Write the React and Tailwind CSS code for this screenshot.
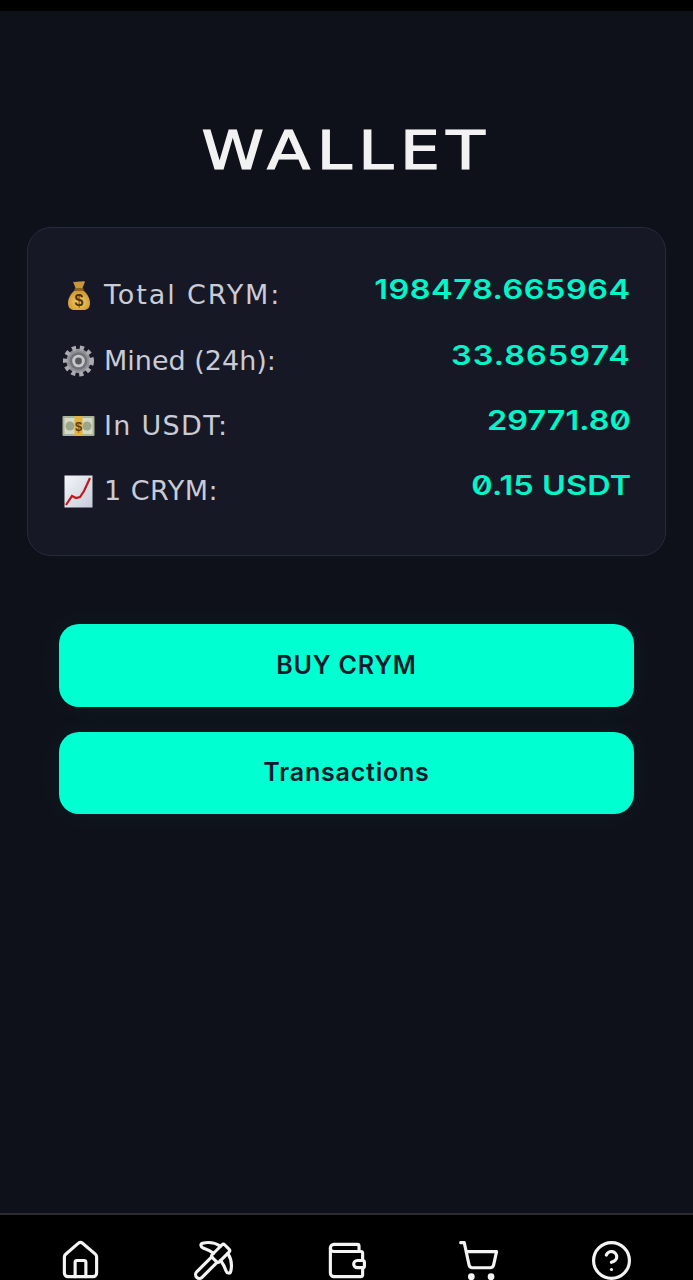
import { House, Pickaxe, Wallet, ShoppingCart, CircleHelp } from 'lucide-react';

const BagIcon = () => (
    <svg width="32" height="32" viewBox="0 0 32 32">
        <defs>
            <radialGradient id="bagFill" cx="0.5" cy="0.6" r="0.65">
                <stop offset="0" stopColor="#f6cf6a" />
                <stop offset="1" stopColor="#c98f2e" />
            </radialGradient>
        </defs>
        <path d="M10 1.500c2 1.200 3.500 .2 6 0 2.500 .2 4 -1 6 .2l-2.500 6.300h-7z" fill="#c9963a" />
        <rect x="11.500" y="8" width="9" height="2.500" rx="1.200" fill="#8a6420" />
        <path d="M11.500 10.500h9c4 3.500 6.500 8 6.500 12.500 0 5 -3 7 -6 7h-10c-3 0 -6 -2 -6 -7 0 -4.500 2.500 -9 6.500 -12.500z" fill="url(#bagFill)" />
        <text x="16" y="26" textAnchor="middle" fontSize="16" fontWeight="700" fill="#4a3410" fontFamily="'Liberation Sans', sans-serif">$</text>
    </svg>
);

const GearIcon = () => (
    <svg width="34" height="34" viewBox="0 0 34 34">
        <circle cx="17" cy="17" r="12.500" fill="#8e9096" />
        <circle cx="17" cy="17" r="13.500" fill="none" stroke="#a9abb0" strokeWidth="5" strokeDasharray="4.200 3.870" />
        <circle cx="17" cy="17" r="9" fill="#6f7177" />
        <circle cx="17" cy="17" r="6.500" fill="#c4c6ca" />
        <circle cx="17" cy="17" r="3.500" fill="#55575c" />
    </svg>
);

const CashIcon = () => (
    <svg width="33" height="22" viewBox="0 0 33 22">
        <rect x="0.500" y="1" width="32" height="20" rx="1" fill="#a9b59a" />
        <rect x="2.500" y="3" width="28" height="16" fill="#d6d9c4" />
        <circle cx="8" cy="11" r="4.500" fill="#9ba68a" />
        <circle cx="25" cy="11" r="4.500" fill="#9ba68a" />
        <rect x="12.500" y="1" width="8" height="20" fill="#e2b33f" />
        <text x="16.500" y="16" textAnchor="middle" fontSize="13" fontWeight="700" fill="#5a4310" fontFamily="'Liberation Sans', sans-serif">$</text>
    </svg>
);

const ChartIcon = () => (
    <svg width="29" height="33" viewBox="0 0 29 33">
        <defs>
            <linearGradient id="chartFill" x1="0" y1="0" x2="1" y2="1">
                <stop offset="0" stopColor="#f4f6f9" />
                <stop offset="1" stopColor="#c6ccd8" />
            </linearGradient>
        </defs>
        <rect x="0.500" y="0.500" width="28" height="32" fill="url(#chartFill)" />
        <path d="M2 30l6 -9 4 2 4 -1 4 -6 6 -13" fill="none" stroke="#c4161c" strokeWidth="2.200" />
    </svg>
);

const ROWS = [
    { icon: <BagIcon />, label: "Total CRYM:", labelClass: "tracking-[1.9px]", value: "198478.665964", valueClass: "tracking-[0.45px]" },
    { icon: <GearIcon />, label: "Mined (24h):", labelClass: "tracking-[0px]", value: "33.865974", valueClass: "tracking-[0.9px]" },
    { icon: <CashIcon />, label: "In USDT:", labelClass: "tracking-[1.3px]", value: "29771.80", valueClass: "tracking-[0.05px]" },
    { icon: <ChartIcon />, label: "1 CRYM:", labelClass: "tracking-[0.5px]", value: "0.15 USDT", valueClass: "tracking-[0.1px]" },
];

const NAV_ICONS = [House, Pickaxe, Wallet, ShoppingCart, CircleHelp];

export default function App() {
    return (
        <div className="h-[1280px] overflow-hidden flex flex-col bg-[#0f111a] font-['Inter',sans-serif]">
            <div className="h-[11px] bg-black shrink-0"></div>

            <main className="flex-1">
                <h1 className="mt-[106px] h-[68px] leading-[68px] text-center text-[54px] font-normal tracking-[5.5px] scale-x-[1.17] text-[#f2f2f2] [-webkit-text-stroke:1.2px_#f2f2f2] font-['DejaVu_Sans',sans-serif]">WALLET</h1>

                <div className="mt-[42px] mx-[27px] h-[329px] pt-[35px] pl-[34px] pr-[34px] rounded-[24px] bg-[#161825] border border-[#252b3b] shadow-[0_0_24px_rgba(0,255,209,0.02)]">
                    {ROWS.map(row => (
                        <div key={row.label} className="h-[65.33px] flex items-center justify-between">
                            <div className="flex items-center">
                                <span className="w-[33px] flex justify-center">{row.icon}</span>
                                <span className={`ml-[9px] text-[27px] text-[#c9cbd6] font-['DejaVu_Sans',sans-serif] ${row.labelClass}`}>{row.label}</span>
                            </div>
                            <span className={`mb-[10px] text-[27px] font-semibold slashed-zero scale-x-[1.2] origin-right text-[#00f5c8] ${row.valueClass}`}>{row.value}</span>
                        </div>
                    ))}
                </div>

                <div className="mt-[68px] mx-[59px] flex flex-col gap-[25px]">
                    <button className="h-[82.5px] rounded-[20px] bg-[#00ffd1] text-[25px] font-semibold tracking-[0.8px] text-[#0f1a2e] shadow-[0_0_30px_rgba(0,255,209,0.05)]">BUY CRYM</button>
                    <button className="h-[82.5px] rounded-[20px] bg-[#00ffd1] text-[25px] font-semibold tracking-[0.8px] text-[#0f1a2e] shadow-[0_0_30px_rgba(0,255,209,0.05)]">Transactions</button>
                </div>
            </main>

            <nav className="h-[67px] shrink-0 bg-black border-t-2 border-[#2a2b30] flex justify-between pl-[59px] pr-[60px] pt-[24px]">
                {NAV_ICONS.map((Icon, i) => (
                    <Icon key={i} size={43} strokeWidth={1.75} color="#f4f4f4" />
                ))}
            </nav>
        </div>
    );
}
